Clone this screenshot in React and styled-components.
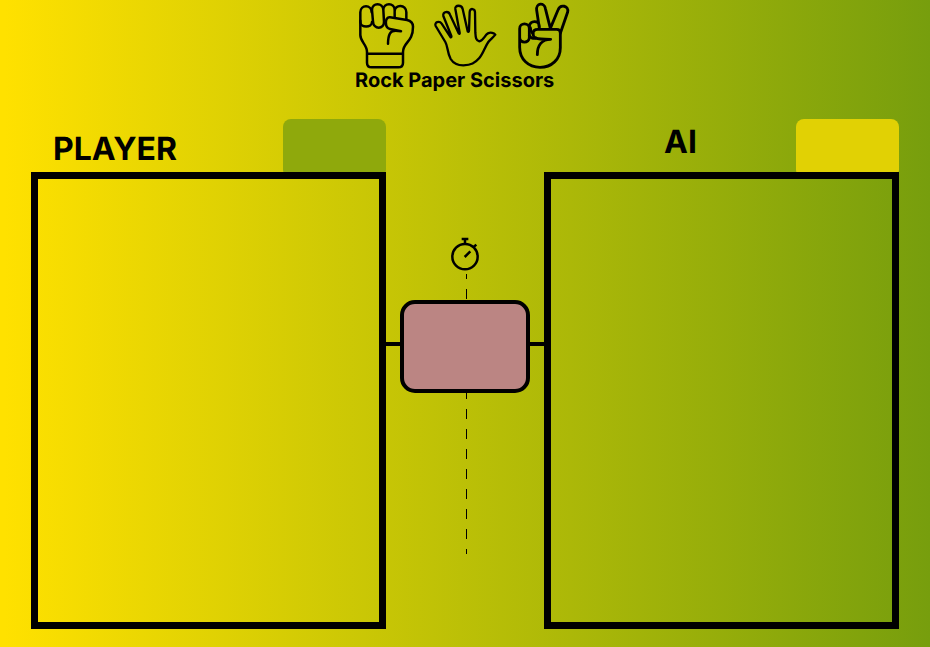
import React from "react";
import styled, { createGlobalStyle } from "styled-components";

const GlobalStyle = createGlobalStyle`
  * { box-sizing: border-box; }
  body { margin: 0; overflow: hidden; }
`;

const Page = styled.div`
  height: 647px;
  display: flex;
  flex-direction: column;
  font-family: Inter, sans-serif;
  text-rendering: geometricPrecision;
  color: #000;
  background: linear-gradient(90deg, #ffe100 0.5%, #779e0d 100%);
`;

const Header = styled.header`
  height: 119px;
`;

const Hands = styled.div`
  display: flex;
  height: 68px;
  padding-left: 350px;
`;

const HandIcon = styled.svg`
  width: 75px;
  height: 72px;
  flex: none;
  margin-right: ${(p) => p.$gap || 0}px;
  fill: none;
  stroke: #000;
  stroke-width: ${(p) => p.$stroke};
  stroke-linecap: round;
  stroke-linejoin: round;
`;

const GameTitle = styled.h1`
  margin: 0 0 0 355px;
  font-size: 20px;
  line-height: 24px;
  font-weight: 700;
  white-space: nowrap;
`;

const Board = styled.main`
  display: grid;
  grid-template-columns: 355px 158px 355px;
  padding-left: 31px;
  height: 510px;
`;

const Side = styled.section`
  display: flex;
  flex-direction: column;
`;

const SideHeader = styled.div`
  display: flex;
  justify-content: space-between;
  height: 53px;
`;

const SideName = styled.h2`
  margin: ${(p) => p.$top}px 0 0 ${(p) => p.$left}px;
  font-size: 32px;
  line-height: 39px;
  font-weight: 700;
`;

const ScoreTab = styled.div`
  width: 103px;
  height: 59px;
  border-radius: 8px;
  background: ${(p) => p.$color};
`;

const Arena = styled.div`
  height: 457px;
  border: 7px solid #000;
  z-index: 1;
  isolation: isolate;
`;

const Center = styled.section`
  display: flex;
  flex-direction: column;
  padding-top: 111px;
`;

const Stopwatch = styled.svg`
  width: 50px;
  height: 44px;
  margin-left: 54px;
  fill: none;
  stroke: #000;
  stroke-width: 7.5;
`;

const DashedLine = styled.div`
  width: 1px;
  height: ${(p) => p.$length}px;
  margin-left: 80px;
  background: repeating-linear-gradient(#000 0 10px, transparent 10px 20px);
  background-position: 0 ${(p) => p.$offset}px;
  background-size: 1px 20px;
`;

const ResultRow = styled.div`
  display: flex;
  align-items: center;
`;

const Connector = styled.div`
  flex: 1;
  height: 4px;
  margin-top: -5px;
  background: #000;
`;

const ResultBox = styled.div`
  width: 130px;
  height: 93px;
  border: 4px solid #000;
  border-radius: 15px;
  background: #bb8583;
`;

function Fist() {
  return (
    <HandIcon viewBox="0 0 225 216" $stroke={7.5}>
      <path d="M65 37C65 13 31 13 31 37V66C31 84 66 84 66 66" />
      <path d="M31 62V105C31 126 51 133 51 156V188Q51 202 65 202H145Q159 202 159 188V156C159 126 189 128 189 80Q189 64 171 60L120 52C103 50 104 84 120 87L153 94Q126 88 120 100Q114 111 114 131M51 161H159" />
      <path d="M66 30C66 7 99 7 100 30L102 65C103 89 70 89 69 65ZM100 30C100 7 134 7 134 30V52M134 34C134 12 169 12 169 37V58" />
    </HandIcon>
  );
}

function Palm() {
  return (
    <HandIcon viewBox="0 0 225 216" $stroke={7} $gap={5}>
      <path d="M32 78C27 67 43 61 50 71L77 112Q80 112 79 108L55 48C52 34 71 32 75 44L101 100Q105 103 104 98L91 27C89 14 110 14 113 27L128 94Q131 97 132 92L134 36C135 23 150 25 150 37L151 98C152 113 153 122 163 124C176 122 178 107 189 100C197 96 207 99 211 104C206 111 195 119 190 126C180 140 175 160 163 174C149 190 139 195 115 196C96 196 85 190 77 177C66 157 69 139 61 126Z" />
    </HandIcon>
  );
}

function Victory() {
  return (
    <HandIcon viewBox="0 0 225 216" $stroke={8.5}>
      <path d="M44 86C44 67 73 67 73 86V112C73 131 44 131 44 112ZM44 112V142C44 178 70 202 105 202C140 202 166 178 166 143V99Q166 88 155 88H98C80 88 80 110 94 115Q99 118 137 118C111 118 97 136 97 164" />
      <path d="M73 80C74 60 102 60 103 78V86M73 107C76 114 86 117 93 114M76 83Q78 98 84 100M103 84L95 31C92 8 118 7 121 25L136 85M136 85L159 30C166 11 192 17 188 36L166 100" />
    </HandIcon>
  );
}

export default function App() {
  return (
    <>
      <GlobalStyle />
      <Page>
        <Header>
          <Hands>
            <Fist />
            <Palm />
            <Victory />
          </Hands>
          <GameTitle>Rock Paper Scissors</GameTitle>
        </Header>
        <Board>
          <Side>
            <SideHeader>
              <SideName $top={10} $left={22}>PLAYER</SideName>
              <ScoreTab $color="#8fa90c" />
            </SideHeader>
            <Arena />
          </Side>
          <Center>
            <Stopwatch viewBox="0 0 150 132">
              <circle cx="75" cy="80" r="38" />
              <path d="M65 27H85M75 27V42M74 81L91 64M101 51L109 44" />
            </Stopwatch>
            <DashedLine $length={26} $offset={-5} />
            <ResultRow>
              <Connector />
              <ResultBox />
              <Connector />
            </ResultRow>
            <DashedLine $length={161} $offset={-4} />
          </Center>
          <Side>
            <SideHeader>
              <SideName $top={3} $left={120}>AI</SideName>
              <ScoreTab $color="#e1d104" />
            </SideHeader>
            <Arena />
          </Side>
        </Board>
      </Page>
    </>
  );
}
